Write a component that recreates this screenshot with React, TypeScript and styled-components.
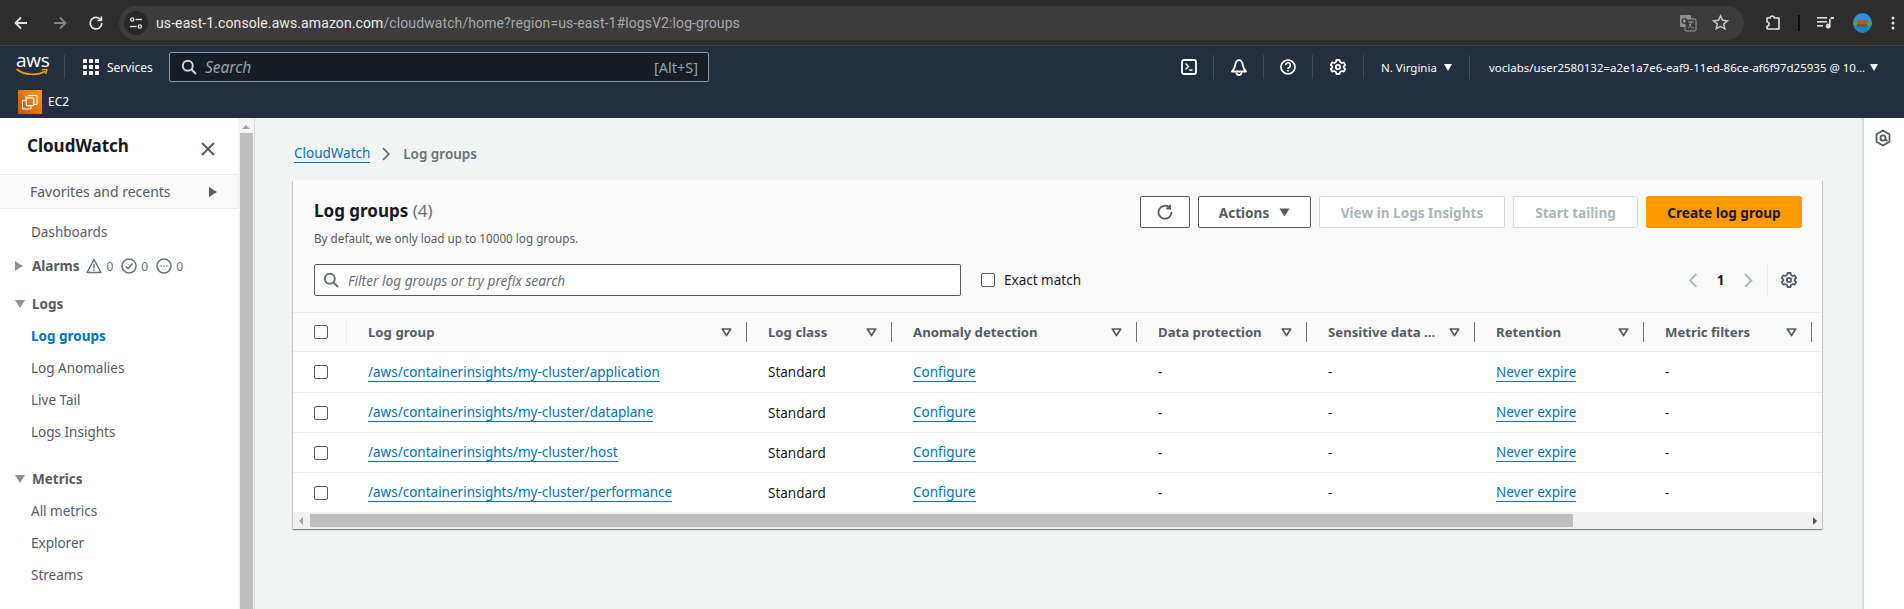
import React from "react";
import styled, { createGlobalStyle } from "styled-components";

const Global = createGlobalStyle`
  html, body { margin: 0; padding: 0; width: 1904px; height: 609px; overflow: hidden; background: #f2f3f3; }
  body { font-family: "Noto Sans", "Open Sans", sans-serif; font-size: 14px; color: #16191f; }
  * { box-sizing: border-box; }
`;

const Page = styled.div`
  width: 1904px; height: 609px; display: flex; flex-direction: column; overflow: hidden;
`;

/* ---------- browser chrome ---------- */
const BrowserBar = styled.div`
  height: 46px; flex: none; background: #2d2d2d; border-bottom: 1px solid #3d3d3d;
  display: flex; align-items: center; padding-bottom: 0;
`;
const NavIcon = styled.span<{ $w: number }>`
  width: ${p => p.$w}px; flex: none; display: flex; justify-content: center; align-items: center;
`;
const UrlPill = styled.div`
  width: 1625px; height: 34px; margin-left: 6px; border-radius: 17px; background: #3c3c3c;
  display: flex; align-items: center; flex: none;
`;
const TuneBadge = styled.span`
  width: 24px; height: 24px; margin-left: 5px; border-radius: 50%; background: #282828; flex: none;
  display: flex; align-items: center; justify-content: center;
`;
const UrlText = styled.span`
  margin-left: 8px; font-family: "Roboto", sans-serif; font-size: 14px; letter-spacing: 0.1px; color: #a8a8a8; white-space: nowrap; flex: 1;
`;
const UrlHost = styled.span`color: #ececec;`;
const ChromeTool = styled.span<{ $w: number; $pl?: number }>`
  width: ${p => p.$w}px; flex: none; display: flex; justify-content: center; align-items: center;
  padding-left: ${p => p.$pl ?? 0}px;
`;
const ChromeSep = styled.span`width: 2px; height: 16px; background: #0c0c0c; flex: none;`;

/* ---------- aws header ---------- */
const TopNav = styled.header`
  height: 72px; flex: none; background: #232f3e; display: flex; flex-direction: column; color: #fff;
`;
const TopRow = styled.div`
  height: 41px; flex: none; display: flex; align-items: center; padding-top: 1px;
`;
const LogoBox = styled.div`
  width: 65px; height: 24px; flex: none; margin-left: 0; padding-left: 16px; border-right: 1px solid #414d5c;
  display: flex; flex-direction: column; align-items: flex-start;
`;
const LogoText = styled.span`
  font-family: "Open Sans", sans-serif; font-size: 19px; line-height: 15px; letter-spacing: -0.3px; color: #fff; margin-top: -2px; height: 15px;
`;
const ServicesBtn = styled.div`
  display: flex; align-items: center; margin-left: 18px; gap: 8px; width: 86px; flex: none;
  font-size: 12px; color: #fff;
`;
const SearchBox = styled.div`
  width: 540px; height: 30px; flex: none; background: #161d26; border: 1px solid #8d99a8; border-radius: 2px;
  display: flex; align-items: center; padding: 0 10px 0 11px; gap: 8px; color: #95a5a6;
`;
const SearchHint = styled.span`font-style: italic; font-size: 15.5px; flex: 1; color: #95a5a6;`;
const SearchKey = styled.span`font-size: 14.500px; color: #95a5a6;`;
const HeaderRight = styled.div`
  margin-left: 455px; display: flex; align-items: center; height: 24px; flex: none;
`;
const HeadCell = styled.span<{ $w: number }>`
  width: ${p => p.$w}px; height: 24px; flex: none; display: flex; align-items: center; justify-content: center;
  border-right: 1px solid #414d5c; 
`;
const RegionCell = styled.div`
  width: 106px; height: 24px; flex: none; display: flex; align-items: center; padding-left: 17px; gap: 7px;
  font-size: 11.5px; border-right: 1px solid #414d5c; color: #fff;
`;
const UserCell = styled.div`
  display: flex; align-items: center; padding-left: 19px; gap: 5px; font-size: 11.5px; white-space: nowrap; color: #fff;
`;
const SmallDown = styled.span`
  width: 0; height: 0; border-left: 4px solid transparent; border-right: 4px solid transparent; border-top: 7px solid #fff; flex: none;
`;
const FavRow = styled.div`
  height: 31px; display: flex; align-items: center; padding-left: 18px; gap: 6px; font-size: 12px; color: #fff; padding-bottom: 2px;
`;
const Ec2Badge = styled.span`
  width: 24px; height: 24px; background: linear-gradient(45deg, #c8511b, #ff9900); display: flex; align-items: center; justify-content: center; flex: none;
`;

/* ---------- body ---------- */
const Body = styled.div`flex: 1; min-height: 0; display: flex;`;

const Sidebar = styled.aside`
  width: 238px; flex: none; background: #fff; display: flex; flex-direction: column;
`;
const SideTitleRow = styled.div`
  height: 56px; flex: none; display: flex; align-items: center; padding-left: 27px; padding-bottom: 1px; position: relative;
`;
const SideTitle = styled.span`font-size: 17px; font-weight: 700; color: #16191f; flex: 1; line-height: 1;`;
const CloseIcon = styled.span`width: 16px; height: 16px; margin-right: 22px; margin-top: 6px; display: flex;`;
const FavBand = styled.div`
  height: 35px; flex: none; background: #fafafa; border-top: 1px solid #eaeded; border-bottom: 1px solid #eaeded;
  display: flex; align-items: center; padding-left: 30px; color: #545b64; font-size: 14px; justify-content: space-between; padding-right: 21px;
`;
const FavTri = styled.span`
  width: 0; height: 0; border-top: 5px solid transparent; border-bottom: 5px solid transparent; border-left: 8px solid #545b64;
`;
const NavList = styled.nav`display: flex; flex-direction: column; padding-top: 7px;`;
const NavItem = styled.div<{ $active?: boolean; $mt?: number }>`
  height: 32px; display: flex; align-items: center; padding-left: 31px; flex: none; font-size: 13.5px;
  color: ${p => (p.$active ? "#0073bb" : "#545b64")};
  font-weight: ${p => (p.$active ? 700 : 400)};
  margin-top: ${p => p.$mt ?? 0}px;
`;
const NavSection = styled.div<{ $mt: number }>`
  height: 32px; display: flex; align-items: center; flex: none; font-size: 13.5px; font-weight: 700; color: #545b64;
  margin-top: ${p => p.$mt}px; padding-left: 15px; 
`;
const TriBox = styled.span`width: 17px; flex: none; display: flex;`;
const CaretRight = styled.span`
  width: 0; height: 0; border-top: 5px solid transparent; border-bottom: 5px solid transparent; border-left: 8px solid #879596;
`;
const CaretDown = styled.span`
  width: 0; height: 0; border-left: 5px solid transparent; border-right: 5px solid transparent; border-top: 8px solid #879596;
`;
const AlarmStats = styled.span`display: flex; align-items: center; margin-left: 7px; gap: 4px; font-size: 12px; font-weight: 400; color: #687078;`;
const AlarmNum = styled.span`margin-right: 4px;`;

const VScroll = styled.div`
  width: 16px; flex: none; background: #f4f4f4; display: flex; flex-direction: column; align-items: center; padding-top: 5px;
`;
const VThumb = styled.div`width: 13px; flex: 1; background: #bebebe; margin-top: 4px;`;
const UpTri = styled.span`
  width: 0; height: 0; border-left: 4px solid transparent; border-right: 4px solid transparent; border-bottom: 4px solid #a3a3a3;
  margin-top: 2px;
`;

const Main = styled.main`
  flex: 1; min-width: 0; background: #f2f3f3; border-left: 1px solid #d5dbdb; padding: 0 40px 0 38px; display: flex; flex-direction: column;
`;
const Crumbs = styled.div`
  height: 62px; flex: none; display: flex; align-items: center; padding-top: 9px; padding-left: 1px; font-size: 13.5px;
`;
const CrumbLink = styled.a`
  color: #0073bb; border-bottom: 1px solid #0073bb; line-height: 18px;
`;
const CrumbSep = styled.span`margin: 0 12px 0 11px; display: flex;`;
const CrumbNow = styled.span`color: #687078; font-weight: 600;`;

const Card = styled.section`
  width: 1529px; background: #fff; border-radius: 0; box-shadow: 0 1px 1px 0 rgba(0,28,36,.3), 1px 1px 1px 0 rgba(0,28,36,.15), -1px 1px 1px 0 rgba(0,28,36,.15);
  flex: none; overflow: hidden;
`;
const CardHead = styled.div`
  height: 132px; background: #fafafa; padding: 16px 20px 16px 21px; display: flex; flex-direction: column; justify-content: space-between;
`;
const HeadTop = styled.div`display: flex; justify-content: space-between; align-items: flex-start;`;
const TitleBlock = styled.div`display: flex; flex-direction: column;`;
const CardTitle = styled.h1`
  margin: 5px 0 0; font-size: 17px; line-height: 20px; font-weight: 700; color: #16191f;
`;
const TitleCount = styled.span`font-weight: 400; color: #687078;`;
const CardSub = styled.p`margin: 9px 0 0; font-size: 11.7px; line-height: 16px; color: #545b64;`;
const Buttons = styled.div`display: flex; gap: 8px;`;
const Btn = styled.button<{ $variant?: "normal" | "disabled" | "primary"; $w: number }>`
  width: ${p => p.$w}px; height: 32px; border-radius: 2px; font-family: inherit; font-size: 13.6px; font-weight: 700; padding: 0;
  display: flex; align-items: center; justify-content: center; gap: 10px;
  background: ${p => (p.$variant === "primary" ? "#ff9900" : "#fff")};
  color: ${p => (p.$variant === "primary" ? "#16191f" : p.$variant === "disabled" ? "#aab7b8" : "#545b64")};
  border: 1px solid ${p => (p.$variant === "primary" ? "#ff9900" : p.$variant === "disabled" ? "#d5dbdb" : "#545b64")};
`;
const FilterRow = styled.div`display: flex; align-items: center; height: 32px;`;
const FilterInput = styled.div`
  width: 647px; height: 32px; background: #fff; border: 1px solid #545b64; border-radius: 2px;
  display: flex; align-items: center; padding-left: 8px; gap: 9px; flex: none;
`;
const FilterHint = styled.span`font-style: italic; font-size: 13.7px; color: #687078;`;
const Check = styled.span`
  width: 14px; height: 14px; background: #fff; border: 1px solid #545b64; border-radius: 2px; display: block; flex: none;
`;
const ExactMatch = styled.label`
  display: flex; align-items: center; gap: 9px; margin-left: 20px; font-size: 13.5px; color: #16191f;
`;
const Pager = styled.div`
  margin-left: auto; margin-right: 5px; display: flex; align-items: center; height: 32px;
`;
const PageNum = styled.span`font-size: 13.5px; font-weight: 700; width: 44px; text-align: center; color: #16191f;`;
const PagerSep = styled.span`width: 1px; height: 32px; background: #eaeded; margin: 0 13px 0 14px;`;

const GridRow = styled.div<{ $head?: boolean; $first?: boolean }>`
  display: grid; grid-template-columns: 54px 400px 145px 245px 170px 168px 169px 168px;
  height: 40px; align-items: center;
  background: ${p => (p.$head ? "#fafafa" : "#fff")};
  border-top: ${p => (p.$first ? "none" : "1px solid #eaeded")};
  ${p => (p.$head ? "border-bottom: 1px solid #eaeded;" : "")}
`;
const CheckCell = styled.div<{ $head?: boolean }>`
  padding-left: 21px; display: flex; align-items: center; height: 20px;
  ${p => (p.$head ? "border-right: 1px solid #eaeded;" : "")}
`;
const HeadCol = styled.div`
  height: 20px; display: flex; align-items: center; justify-content: space-between; padding: 0 14px 0 21px;
  border-right: 1px solid #687078; font-size: 13.2px; font-weight: 700; color: #545b64; white-space: nowrap;
`;
const Cell = styled.div`padding-left: 21px; font-size: 13.5px; color: #16191f; white-space: nowrap;`;
const Link = styled.a`
  color: #0073bb; border-bottom: 1px solid #0073bb; display: inline-block; line-height: 18px;
`;
const HScroll = styled.div`
  height: 17px; background: #f0f0f0; display: flex; align-items: center; padding: 0 5px 0 6px;
`;
const HThumb = styled.div`width: 1263px; height: 13px; background: #bebebe; margin-left: 7px;`;
const LeftTri = styled.span`
  width: 0; height: 0; border-top: 4px solid transparent; border-bottom: 4px solid transparent; border-right: 4px solid #a3a3a3;
`;
const RightTri = styled.span`
  width: 0; height: 0; border-top: 4px solid transparent; border-bottom: 4px solid transparent; border-left: 4px solid #505050; margin-left: auto;
`;
const RightPanel = styled.aside`
  width: 42px; flex: none; background: #fff; border-left: 2px solid #d5dbdb; display: flex; justify-content: center; padding: 11px 2px 0 0;
`;

/* ---------- icons ---------- */
const Arrow = ({ dir, color }: { dir: "l" | "r"; color: string }) => (
  <svg width="16" height="16" viewBox="0 0 16 16" fill="none" stroke={color} strokeWidth="1.8" style={dir === "r" ? { transform: "scaleX(-1)" } : undefined}>
    <path d="M14 8H2.5M8 2.5 2.5 8 8 13.5" />
  </svg>
);
const Reload = () => (
  <svg width="16" height="16" viewBox="0 0 16 16" fill="none" stroke="#e3e3e3" strokeWidth="1.7">
    <path d="M13 5.2A5.8 5.8 0 1 0 13.8 8" />
    <path d="M13.4 1.5v4h-4" />
  </svg>
);
const Tune = () => (
  <svg width="14" height="14" viewBox="0 0 14 14" fill="none" stroke="#e3e3e3" strokeWidth="1.3">
    <circle cx="3.2" cy="3.5" r="1.6" /><path d="M6.5 3.5H13" />
    <circle cx="10.8" cy="10.5" r="1.6" /><path d="M1 10.5h6.5" />
  </svg>
);
const Translate = () => (
  <svg width="18" height="18" viewBox="0 0 18 18">
    <rect x="1" y="1" width="11" height="12" rx="1" fill="#8f8f8f" />
    <rect x="6" y="5" width="11" height="12" rx="1" fill="#3c3c3c" stroke="#9a9a9a" />
    <circle cx="5.5" cy="7" r="2.4" fill="none" stroke="#3c3c3c" strokeWidth="1.2" />
    <path d="M9 8h6M12 8c0 3-1.5 5-3 6M10 10c1 2 3 3.5 5 4" fill="none" stroke="#9a9a9a" />
  </svg>
);
const Star = () => (
  <svg width="17" height="17" viewBox="0 0 17 17" fill="none" stroke="#c7c7c7" strokeWidth="1.5">
    <path d="M8.5 1.8 10.5 6.3l4.9.5-3.7 3.2 1.1 4.8-4.3-2.5-4.3 2.5 1.1-4.8L1.6 6.8l4.9-.5z" />
  </svg>
);
const Puzzle = () => (
  <svg width="18" height="18" viewBox="0 0 18 18" fill="none" stroke="#e3e3e3" strokeWidth="1.6">
    <path d="M3 4h3.2a2 2 0 0 1 4 0H15V15H3.600l-.6-.6v-2.200a2.100 2.100 0 0 0 0-4.200z" strokeLinejoin="round" />
  </svg>
);
const MediaQueue = () => (
  <svg width="18" height="14" viewBox="0 0 18 14" fill="#dcdcdc">
    <rect x="0" y="1" width="10" height="1.6" /><rect x="0" y="5" width="10" height="1.6" /><rect x="0" y="9" width="6" height="1.6" />
    <path d="M12 3h5V1h-3.4v8.6a2.4 2.4 0 1 1-1.6-1.8z" />
  </svg>
);
const Avatar = () => (
  <svg width="19" height="20" viewBox="0 0 19 20">
    <defs>
      <clipPath id="avatarClip"><ellipse cx="9.5" cy="10" rx="9.5" ry="10" /></clipPath>
    </defs>
    <g clipPath="url(#avatarClip)">
      <rect width="19" height="10" fill="#2f8fd8" />
      <rect y="10" width="19" height="10" fill="#1f7fc8" />
      <rect y="9" width="19" height="3.5" fill="#58a23c" />
      <rect x="4" y="7" width="10" height="4" fill="#a5602c" />
      <rect x="4" y="11" width="10" height="3" fill="#6d5a2c" />
    </g>
  </svg>
);
const Dots = () => (
  <svg width="4" height="14" viewBox="0 0 4 14" fill="#e3e3e3"><circle cx="2" cy="2" r="1.5" /><circle cx="2" cy="7" r="1.5" /><circle cx="2" cy="12" r="1.5" /></svg>
);
const Smile = () => (
  <svg width="33" height="9" viewBox="0 0 33 9" fill="none">
    <path d="M1 1.5C8 7 21 8 29 3.5" stroke="#ff9900" strokeWidth="1.7" strokeLinecap="round" />
    <path d="M26 1.8 31 1.4 29.6 6" stroke="#ff9900" strokeWidth="1.4" strokeLinejoin="round" />
  </svg>
);
const Grid9 = () => (
  <svg width="16" height="16" viewBox="0 0 16 16" fill="#fff">
    {[0, 6, 12].flatMap(y => [0, 6, 12].map(x => <rect key={`${x}-${y}`} x={x} y={y} width="4" height="4" rx=".4" />))}
  </svg>
);
const Magnifier = ({ color, size = 16 }: { color: string; size?: number }) => (
  <svg width={size} height={size} viewBox="0 0 16 16" fill="none" stroke={color} strokeWidth="2">
    <circle cx="6.8" cy="6.8" r="5" /><path d="M10.5 10.5 15 15" />
  </svg>
);
const Terminal = () => (
  <svg width="16" height="16" viewBox="0 0 16 16" fill="none" stroke="#fff" strokeWidth="1.8">
    <rect x="1" y="1" width="14" height="14" rx="2" /><path d="M4.5 4.5 7.5 7.5 4.5 10.5" strokeWidth="1.4" /><path d="M8 11h3.5" strokeWidth="1.4" />
  </svg>
);
const Bell = () => (
  <svg width="16" height="17" viewBox="0 0 16 17" fill="none" stroke="#fff" strokeWidth="1.8">
    <path d="M1 12.500h14c-2.500-2.500-2.800-4-3.200-6.500C11.400 3.500 10 1.200 8 1.200S4.600 3.500 4.200 6C3.800 8.500 3.500 10 1 12.500z" strokeLinejoin="round" />
    <path d="M5.500 13.500a2.500 2.500 0 0 0 5 0" />
  </svg>
);
const Help = () => (
  <svg width="16" height="16" viewBox="0 0 16 16" fill="none" stroke="#fff" strokeWidth="1.7">
    <circle cx="8" cy="8" r="7" /><path d="M5.600 6.200a2.400 2.400 0 1 1 3.700 2c-.9.500-1.300 1-1.300 1.800" /><path d="M8 11v1.500" />
  </svg>
);
const Gear = ({ color, size = 16 }: { color: string; size?: number }) => (
  <svg width={size} height={size} viewBox="0 0 16 16" fill="none" stroke={color} strokeWidth="1.800">
    <path d="M6.500 1h3l.5 2 1.800 1 2-.6 1.400 2.600-1.500 1.400v1.200l1.500 1.400-1.400 2.600-2-.6-1.800 1-.5 2h-3l-.5-2-1.800-1-2 .6L.8 10l1.500-1.400V7.400L.8 6l1.400-2.600 2 .6L6 3z" strokeLinejoin="round" />
    <circle cx="8" cy="8" r="2.200" />
  </svg>
);
const Chip = () => (
  <svg width="18" height="18" viewBox="0 0 18 18" fill="none" stroke="#fff" strokeWidth="1">
    <path d="M7 2.500h9v9h-3M5 5.500v-3" />
    <path d="M5 7.500H1.500v8.500h8.500v-3" />
    <rect x="5.500" y="5" width="7" height="7.500" fill="#e8741a" />
    <path d="M7 3.500V5M9 3.500V5M11 3.500V5M7 12.500V14M9 12.500V14M11 12.500V14M4 7h1.500M4 9h1.500M4 11h1.500M12.500 7H14M12.500 9H14M12.500 11H14" strokeWidth=".8" />
  </svg>
);
const Close = () => (
  <svg width="16" height="16" viewBox="0 0 16 16" fill="none" stroke="#545b64" strokeWidth="2"><path d="M2 2l12 12M14 2 2 14" /></svg>
);
const WarnIcon = () => (
  <svg width="16" height="16" viewBox="0 0 16 16" fill="none" stroke="#687078" strokeWidth="1.500">
    <path d="M8 1.500 15 14.500H1z" strokeLinejoin="round" /><path d="M8 6v4.500M8 11.500v1.500" />
  </svg>
);
const OkIcon = () => (
  <svg width="16" height="16" viewBox="0 0 16 16" fill="none" stroke="#687078" strokeWidth="1.500">
    <circle cx="8" cy="8" r="7" /><path d="M4.800 8.200 7.200 10.500 11.500 5.500" />
  </svg>
);
const MoreIcon = () => (
  <svg width="16" height="16" viewBox="0 0 16 16" fill="none" stroke="#687078" strokeWidth="1.500">
    <circle cx="8" cy="8" r="7" /><path d="M4.500 8h1.200M7.400 8h1.200M10.300 8h1.200" />
  </svg>
);
const ChevronR = ({ color = "#687078", h = 14 }: { color?: string; h?: number }) => (
  <svg width={h * 0.7} height={h} viewBox="0 0 10 14" fill="none" stroke={color} strokeWidth="1.800"><path d="M2 1l6 6-6 6" /></svg>
);
const ChevronL = ({ color = "#aab7b8", h = 14 }: { color?: string; h?: number }) => (
  <svg width={h * 0.7} height={h} viewBox="0 0 10 14" fill="none" stroke={color} strokeWidth="1.800"><path d="M8 1 2 7l6 6" /></svg>
);
const Refresh = () => (
  <svg width="16" height="16" viewBox="0 0 16 16" fill="none" stroke="#545b64" strokeWidth="1.800">
    <path d="M12.500 3.500A6.500 6.500 0 1 0 14.500 8" /><path d="M13 .8v3.700H9.300" />
  </svg>
);
const DownSolid = () => (
  <svg width="11" height="9" viewBox="0 0 11 9" fill="#545b64"><path d="M.5.500h10L5.500 8.500z" /></svg>
);
const FilterTri = () => (
  <svg width="11" height="9" viewBox="0 0 11 9" fill="none" stroke="#545b64" strokeWidth="1.700"><path d="M1.300 1h8.400L5.500 7.500z" strokeLinejoin="round" /></svg>
);
const Hexa = () => (
  <svg width="18" height="18" viewBox="0 0 18 18" fill="none" stroke="#545b64" strokeWidth="1.800">
    <path d="M9 1.500 15.500 5.200v7.600L9 16.500 2.500 12.800V5.200z" strokeLinejoin="round" />
    <circle cx="9" cy="9" r="2.600" /><path d="M11 10.500 13.500 12" />
  </svg>
);

const columns = ["Log group", "Log class", "Anomaly detection", "Data protection", "Sensitive data ...", "Retention", "Metric filters"];
const groups = ["application", "dataplane", "host", "performance"];

export default function App() {
  return (
    <Page>
      <Global />
      <BrowserBar>
        <NavIcon $w={42}><Arrow dir="l" color="#e3e3e3" /></NavIcon>
        <NavIcon $w={36}><Arrow dir="r" color="#858585" /></NavIcon>
        <NavIcon $w={35}><Reload /></NavIcon>
        <UrlPill>
          <TuneBadge><Tune /></TuneBadge>
          <UrlText><UrlHost>us-east-1.console.aws.amazon.com</UrlHost>/cloudwatch/home?region=us-east-1#logsV2:log-groups</UrlText>
          <ChromeTool $w={32}><Translate /></ChromeTool>
          <ChromeTool $w={32}><Star /></ChromeTool>
          <ChromeTool $w={8} />
        </UrlPill>
        <ChromeTool $w={54} $pl={4}><Puzzle /></ChromeTool>
        <ChromeSep />
        <ChromeTool $w={52}><MediaQueue /></ChromeTool>
        <ChromeTool $w={20}><Avatar /></ChromeTool>
        <ChromeTool $w={41}><Dots /></ChromeTool>
      </BrowserBar>
      <TopNav>
        <TopRow>
          <LogoBox>
            <LogoText>aws</LogoText>
            <Smile />
          </LogoBox>
          <ServicesBtn><Grid9 />Services</ServicesBtn>
          <SearchBox>
            <Magnifier color="#d1d5db" />
            <SearchHint>Search</SearchHint>
            <SearchKey>[Alt+S]</SearchKey>
          </SearchBox>
          <HeaderRight>
            <HeadCell $w={50}><Terminal /></HeadCell>
            <HeadCell $w={50}><Bell /></HeadCell>
            <HeadCell $w={49}><Help /></HeadCell>
            <HeadCell $w={51}><Gear color="#fff" /></HeadCell>
            <RegionCell>N. Virginia<SmallDown /></RegionCell>
            <UserCell>voclabs/user2580132=a2e1a7e6-eaf9-11ed-86ce-af6f97d25935 @ 10...<SmallDown /></UserCell>
          </HeaderRight>
        </TopRow>
        <FavRow>
          <Ec2Badge><Chip /></Ec2Badge>
          EC2
        </FavRow>
      </TopNav>
      <Body>
        <Sidebar>
          <SideTitleRow>
            <SideTitle>CloudWatch</SideTitle>
            <CloseIcon><Close /></CloseIcon>
          </SideTitleRow>
          <FavBand>Favorites and recents<FavTri /></FavBand>
          <NavList>
            <NavItem>Dashboards</NavItem>
            <NavSection $mt={2}>
              <TriBox><CaretRight /></TriBox>Alarms
              <AlarmStats>
                <WarnIcon /><AlarmNum>0</AlarmNum><OkIcon /><AlarmNum>0</AlarmNum><MoreIcon /><AlarmNum>0</AlarmNum>
              </AlarmStats>
            </NavSection>
            <NavSection $mt={6}><TriBox><CaretDown /></TriBox>Logs</NavSection>
            <NavItem $active>Log groups</NavItem>
            <NavItem>Log Anomalies</NavItem>
            <NavItem>Live Tail</NavItem>
            <NavItem>Logs Insights</NavItem>
            <NavSection $mt={15}><TriBox><CaretDown /></TriBox>Metrics</NavSection>
            <NavItem>All metrics</NavItem>
            <NavItem>Explorer</NavItem>
            <NavItem>Streams</NavItem>
          </NavList>
        </Sidebar>
        <VScroll><UpTri /><VThumb /></VScroll>
        <Main>
          <Crumbs>
            <CrumbLink>CloudWatch</CrumbLink>
            <CrumbSep><ChevronR /></CrumbSep>
            <CrumbNow>Log groups</CrumbNow>
          </Crumbs>
          <Card>
            <CardHead>
              <HeadTop>
                <TitleBlock>
                  <CardTitle>Log groups <TitleCount>(4)</TitleCount></CardTitle>
                  <CardSub>By default, we only load up to 10000 log groups.</CardSub>
                </TitleBlock>
                <Buttons>
                  <Btn $w={50}><Refresh /></Btn>
                  <Btn $w={113}>Actions <DownSolid /></Btn>
                  <Btn $w={186} $variant="disabled">View in Logs Insights</Btn>
                  <Btn $w={125} $variant="disabled">Start tailing</Btn>
                  <Btn $w={156} $variant="primary">Create log group</Btn>
                </Buttons>
              </HeadTop>
              <FilterRow>
                <FilterInput>
                  <Magnifier color="#687078" />
                  <FilterHint>Filter log groups or try prefix search</FilterHint>
                </FilterInput>
                <ExactMatch><Check />Exact match</ExactMatch>
                <Pager>
                  <ChevronL h={15} />
                  <PageNum>1</PageNum>
                  <ChevronR color="#aab7b8" h={15} />
                  <PagerSep />
                  <Gear color="#545b64" />
                </Pager>
              </FilterRow>
            </CardHead>
            <GridRow $head>
              <CheckCell $head><Check /></CheckCell>
              {columns.map(c => (
                <HeadCol key={c}>{c}<FilterTri /></HeadCol>
              ))}
            </GridRow>
            {groups.map((g, i) => (
              <GridRow key={g} $first={i === 0}>
                <CheckCell><Check /></CheckCell>
                <Cell><Link>/aws/containerinsights/my-cluster/{g}</Link></Cell>
                <Cell>Standard</Cell>
                <Cell><Link>Configure</Link></Cell>
                <Cell>-</Cell>
                <Cell>-</Cell>
                <Cell><Link>Never expire</Link></Cell>
                <Cell>-</Cell>
              </GridRow>
            ))}
            <HScroll>
              <LeftTri />
              <HThumb />
              <RightTri />
            </HScroll>
          </Card>
        </Main>
        <RightPanel><Hexa /></RightPanel>
      </Body>
    </Page>
  );
}
